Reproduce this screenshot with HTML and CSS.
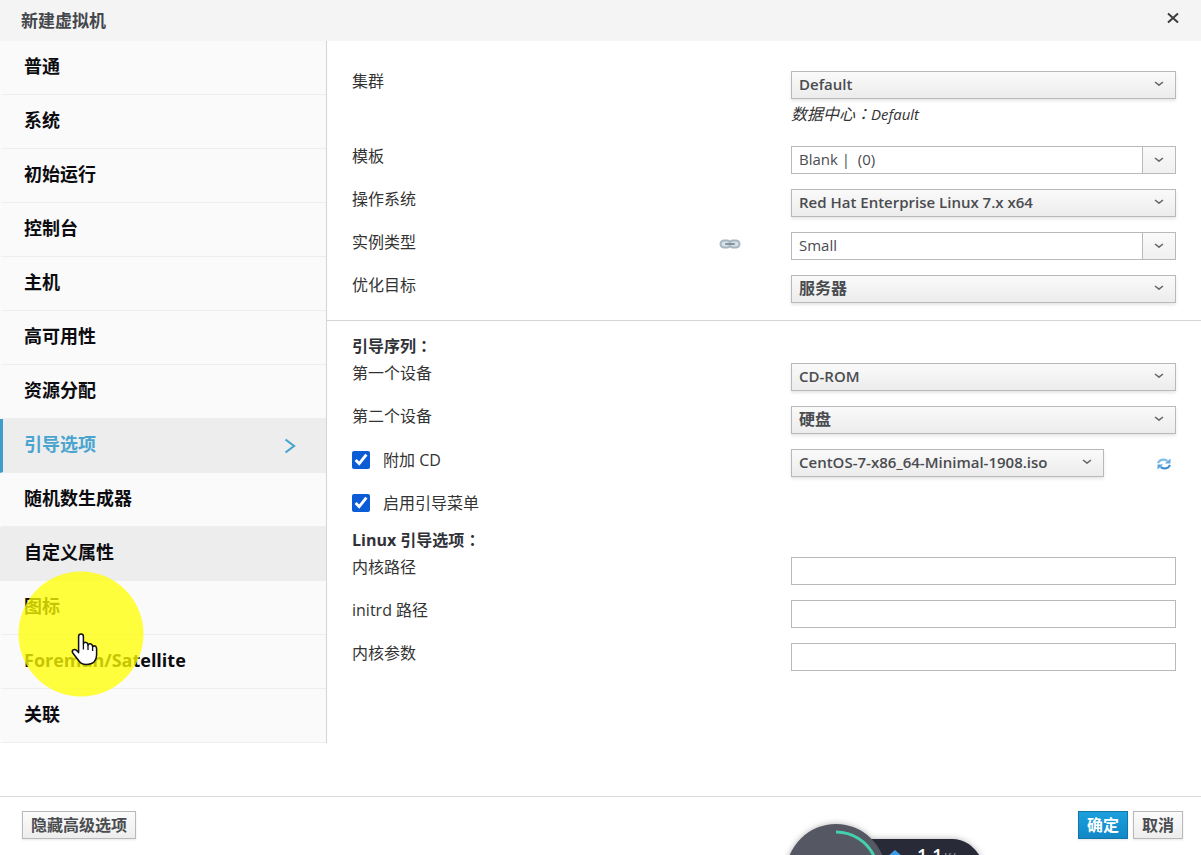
FILE: index.html
```html
<!DOCTYPE html>
<html lang="zh-CN">
<head>
<meta charset="utf-8">
<title>新建虚拟机</title>
<link rel="stylesheet" href="styles.css">
</head>
<body>
<svg class="defs" aria-hidden="true">
  <symbol id="chevron" viewBox="0 0 10 6"><path d="M1 1 L5 4.2 L9 1" fill="none" stroke="#666" stroke-width="1.5" stroke-linejoin="round"/></symbol>
</svg>
<div class="dialog">
  <header class="titlebar">
    <h1 class="title">新建虚拟机</h1>
    <button class="close" type="button" aria-label="关闭">
      <svg width="12" height="12" viewBox="0 0 12 12"><path d="M1 1.5 L11 10.5 M11 1.5 L1 10.5" stroke="#3c3c3c" stroke-width="2"/></svg>
    </button>
  </header>

  <div class="content">
    <nav class="tabs">
      <a class="tab" href="#">普通</a>
      <a class="tab" href="#">系统</a>
      <a class="tab" href="#">初始运行</a>
      <a class="tab" href="#">控制台</a>
      <a class="tab" href="#">主机</a>
      <a class="tab" href="#">高可用性</a>
      <a class="tab" href="#">资源分配</a>
      <a class="tab tab-active" href="#">引导选项
        <svg class="tab-arrow" width="12" height="16" viewBox="0 0 12 16"><path d="M1.5 1.5 L10 8 L1.5 14.5" fill="none" stroke="#49a5cf" stroke-width="2.2"/></svg>
      </a>
      <a class="tab" href="#">随机数生成器</a>
      <a class="tab tab-hover" href="#">自定义属性</a>
      <a class="tab" href="#">图标</a>
      <a class="tab" href="#">Foreman/Satellite</a>
      <a class="tab" href="#">关联</a>
    </nav>

    <form class="form">
      <section class="section section-general">
        <div class="row">
          <label class="label" for="cluster">集群</label>
          <div class="control">
            <div class="select-box">
              <select class="select" id="cluster"><option>Default</option></select>
              <svg class="chevron" width="10" height="6"><use href="#chevron"/></svg>
            </div>
            <p class="hint">数据中心<span class="colon" lang="zh-TW">：</span><span class="hint-latin">Default</span></p>
          </div>
        </div>
        <div class="row">
          <label class="label" for="template">模板</label>
          <div class="control combo">
            <input class="combo-input" id="template" type="text" value="Blank |  (0)">
            <button class="combo-button" type="button" aria-label="展开模板"><svg width="10" height="6"><use href="#chevron"/></svg></button>
          </div>
        </div>
        <div class="row">
          <label class="label" for="os">操作系统</label>
          <div class="control select-box">
            <select class="select" id="os"><option>Red Hat Enterprise Linux 7.x x64</option></select>
            <svg class="chevron" width="10" height="6"><use href="#chevron"/></svg>
          </div>
        </div>
        <div class="row">
          <label class="label" for="instance">实例类型</label>
          <svg class="link-icon" width="22" height="10" viewBox="0 0 22 10">
            <rect x="1.5" y="1.5" width="10" height="7" rx="3.5" fill="#d6e0e7" stroke="#a6b5bf" stroke-width="2"/>
            <rect x="10.5" y="1.5" width="10" height="7" rx="3.5" fill="#d6e0e7" stroke="#a6b5bf" stroke-width="2"/>
            <path d="M7 5 H15" stroke="#84929d" stroke-width="2" stroke-linecap="round"/>
          </svg>
          <div class="control combo">
            <input class="combo-input" id="instance" type="text" value="Small">
            <button class="combo-button" type="button" aria-label="展开实例类型"><svg width="10" height="6"><use href="#chevron"/></svg></button>
          </div>
        </div>
        <div class="row">
          <label class="label" for="optimize">优化目标</label>
          <div class="control select-box">
            <select class="select select-cjk" id="optimize"><option>服务器</option></select>
            <svg class="chevron" width="10" height="6"><use href="#chevron"/></svg>
          </div>
        </div>
      </section>

      <section class="section">
        <h2 class="heading">引导序列<span class="colon" lang="zh-TW">：</span></h2>
        <div class="row">
          <label class="label" for="first">第一个设备</label>
          <div class="control select-box">
            <select class="select" id="first"><option>CD-ROM</option></select>
            <svg class="chevron" width="10" height="6"><use href="#chevron"/></svg>
          </div>
        </div>
        <div class="row">
          <label class="label" for="second">第二个设备</label>
          <div class="control select-box">
            <select class="select select-cjk" id="second"><option>硬盘</option></select>
            <svg class="chevron" width="10" height="6"><use href="#chevron"/></svg>
          </div>
        </div>
        <div class="row">
          <label class="check"><input class="checkbox" type="checkbox" checked>附加 CD</label>
          <div class="control iso">
            <div class="select-box iso-box">
              <select class="select" aria-label="CD 映像"><option>CentOS-7-x86_64-Minimal-1908.iso</option></select>
              <svg class="chevron" width="10" height="6"><use href="#chevron"/></svg>
            </div>
            <button class="refresh" type="button" aria-label="刷新">
              <svg width="14" height="12" viewBox="0 0 14 12">
                <path d="M1 5.2 Q2.5 1.4 7 1.6 Q9 1.7 10.2 3" fill="none" stroke="#7dbbe8" stroke-width="2.2"/>
                <path d="M13.5 0.5 V5.6 H7.8 Z" fill="#69ace0"/>
                <path d="M13 6.8 Q11.5 10.6 7 10.4 Q5 10.3 3.8 9" fill="none" stroke="#3f8fd0" stroke-width="2.2"/>
                <path d="M0.5 11.5 V6.4 H6.2 Z" fill="#5aa3dc"/>
              </svg>
            </button>
          </div>
        </div>
        <div class="row">
          <label class="check"><input class="checkbox" type="checkbox" checked>启用引导菜单</label>
        </div>
      </section>

      <section class="section">
        <h2 class="heading">Linux 引导选项<span class="colon" lang="zh-TW">：</span></h2>
        <div class="row">
          <label class="label" for="kernel">内核路径</label>
          <input class="control text" id="kernel" type="text">
        </div>
        <div class="row">
          <label class="label" for="initrd">initrd 路径</label>
          <input class="control text" id="initrd" type="text">
        </div>
        <div class="row">
          <label class="label" for="params">内核参数</label>
          <input class="control text" id="params" type="text">
        </div>
      </section>
    </form>
  </div>

  <footer class="footer">
    <button class="button button-wide" type="button">隐藏高级选项</button>
    <button class="button button-primary" type="button">确定</button>
    <button class="button" type="button">取消</button>
  </footer>

  <svg class="pointer" width="130" height="130" viewBox="0 0 130 130" aria-hidden="true">
    <circle cx="65" cy="65" r="62.5" fill="#ffff00" fill-opacity="0.76"/>
    <path d="M62.6 67.5 Q62.6 65 65 65 Q67.4 65 67.4 67.5 V75 Q68 73 70 73.4 Q72 73.8 72 76 Q73 74.4 75 75 Q76.6 75.6 76.6 77.6 Q78 76.4 79.4 77.2 Q80.6 78 80.6 80 V86 Q80.6 90 78.4 92.5 Q75.5 95.5 70 95.5 Q65.5 95.5 63 92 L56.8 84 Q55.6 82 57.2 80.8 Q59 79.8 60.8 81.6 L62.6 83.6 Z" fill="#fff" stroke="#111" stroke-width="1.5" stroke-linejoin="round"/>
    <path d="M67.4 75 V80.5 M72 76 V81 M76.6 77.6 V82" stroke="#111" stroke-width="1.3"/>
  </svg>

  <svg class="meter" width="210" height="39" viewBox="0 0 210 39" aria-hidden="true">
    <g class="meter-body">
      <path d="M90 23 H172 Q190 23 201 42 H90 Z" fill="#282a38"/>
      <circle cx="56" cy="58" r="50" fill="#555763"/>
    </g>
    <path d="M56 16 A42 42 0 0 1 94 40" fill="none" stroke="#45cfae" stroke-width="3"/>
    <path d="M108 40 L115 34 L122 40 Z" fill="#3b9ce8"/>
    <text class="meter-text" x="137" y="46">1.1</text>
    <text class="meter-unit" x="164" y="46">K/s</text>
  </svg>
</div>
</body>
</html>
```

FILE: styles.css
```css
* {
  box-sizing: border-box;
}

body {
  margin: 0;
  background: #fff;
  color: #333;
  font-family: "Open Sans", "Noto Sans CJK SC", sans-serif;
  font-size: 16px;
  line-height: 22px;
}

button,
input,
select {
  margin: 0;
  color: #4a4c50;
  font-family: inherit;
}

.defs {
  position: absolute;
  width: 0;
  height: 0;
}

.dialog {
  position: relative;
  display: flex;
  flex-direction: column;
  min-height: 100vh;
  overflow: hidden;
}

.titlebar {
  display: flex;
  align-items: center;
  justify-content: space-between;
  padding: 7px 20px 10px 21px;
  background: #f4f4f4;
}

.title {
  margin: 0;
  padding-top: 4px;
  line-height: 20px;
  color: #44474c;
  font-size: 17px;
  font-weight: 600;
}

.close {
  display: flex;
  padding: 0 2px 2px;
  border: 0;
  background: none;
}

.content {
  display: flex;
  flex: 1;
  align-items: flex-start;
}

.tabs {
  flex: none;
  width: 327px;
  border-right: 1px solid #d4d4d4;
  background: #fafafa;
}

.tab {
  display: flex;
  align-items: center;
  justify-content: space-between;
  height: 54px;
  padding: 0 30px 3px 21px;
  border-bottom: 1px solid #eee;
  border-left: 3px solid transparent;
  color: #0c0c10;
  font-size: 18px;
  font-weight: 700;
  text-decoration: none;
}

.tab-active {
  border-left-color: #3f9ccb;
  background: #ededed;
  color: #49a5cf;
}

.tab-arrow {
  margin-top: 4px;
}

.tab-hover {
  background: #ededed;
}

.form {
  flex: 1;
  min-width: 0;
}

.section {
  display: grid;
  gap: 15px;
  padding: 0 25px 9px;
}

.section-general {
  margin-bottom: 14px;
  padding-top: 30px;
  padding-bottom: 17px;
  border-bottom: 1px solid #d4d4d4;
}

.row {
  display: grid;
  grid-template-columns: minmax(0, 1fr) 72px 385px;
  align-items: start;
  min-height: 28px;
}

.label {
  line-height: 20px;
}

.control {
  grid-column: 3;
}

.heading {
  margin: 0 0 -9px;
  height: 22px;
  color: #303238;
  font-size: 16px;
  font-weight: 700;
}

/* The TC face centres the full-width colon in its box. */
.colon {
  font-family: "Noto Sans CJK TC", sans-serif;
  line-height: 16px;
}

.hint {
  margin: 4px 0 6px;
  height: 22px;
  font-style: italic;
}

.hint-latin {
  font-size: 15px;
}

.select-box {
  position: relative;
}

.select {
  display: block;
  width: 100%;
  height: 28px;
  padding: 0 30px 2px 7px;
  appearance: none;
  border: 1px solid #b9b9b9;
  border-radius: 0;
  background: linear-gradient(#fafafa, #ececec);
  box-shadow: 0 2px 3px rgba(0, 0, 0, 0.1);
  font-size: 15px;
  font-weight: 600;
}

.select-cjk {
  font-size: 16px;
}

.chevron {
  position: absolute;
  top: 10px;
  right: 12px;
  pointer-events: none;
}

.combo {
  display: flex;
  height: 28px;
  border: 1px solid #b9b9b9;
}

.combo-input {
  flex: 1;
  min-width: 0;
  padding: 0 7px 2px;
  border: 0;
  background: #fff;
  font-size: 15px;
}

.combo-button {
  display: flex;
  align-items: center;
  justify-content: center;
  width: 33px;
  padding: 0;
  border: 0;
  border-left: 1px solid #b9b9b9;
  background: linear-gradient(#fafafa, #f0f0f0);
}

.link-icon {
  margin-top: 7px;
}

.iso {
  display: flex;
  align-items: center;
  justify-content: space-between;
}

.iso-box {
  width: 313px;
}

.refresh {
  display: flex;
  padding: 2px 5px 0;
  border: 0;
  background: none;
}

.check {
  display: flex;
  align-items: center;
  gap: 13px;
}

.checkbox {
  width: 18px;
  height: 18px;
  accent-color: #0b5cd5;
}

.text {
  width: 100%;
  height: 28px;
  padding: 0 8px;
  border: 1px solid #b9b9b9;
  background: #fff;
  font-size: 15px;
}

.footer {
  display: flex;
  align-items: center;
  gap: 5px;
  padding: 14px 18px 16px 22px;
  border-top: 1px solid #d9d9d9;
}

.button {
  height: 28px;
  padding: 0 8px 2px;
  border: 1px solid #b9b9b9;
  background: linear-gradient(#fbfbfb, #ededed);
  box-shadow: 0 1px 2px rgba(0, 0, 0, 0.1);
  font-size: 16px;
  font-weight: 600;
}

.button-wide {
  margin-right: auto;
}

.button-primary {
  border-color: #1476a8;
  background: linear-gradient(#1ba0de, #1287c6);
  color: #fff;
}

.pointer {
  position: absolute;
  top: 569px;
  left: 16px;
  pointer-events: none;
}

.meter {
  position: absolute;
  bottom: 0;
  left: 780px;
}

.meter-body {
  filter: drop-shadow(0 0 3px rgba(0, 0, 0, 0.3));
}

.meter-text {
  fill: #fff;
  font-size: 18px;
  font-weight: 600;
}

.meter-unit {
  fill: #9a9ca8;
  font-size: 12px;
}
```
